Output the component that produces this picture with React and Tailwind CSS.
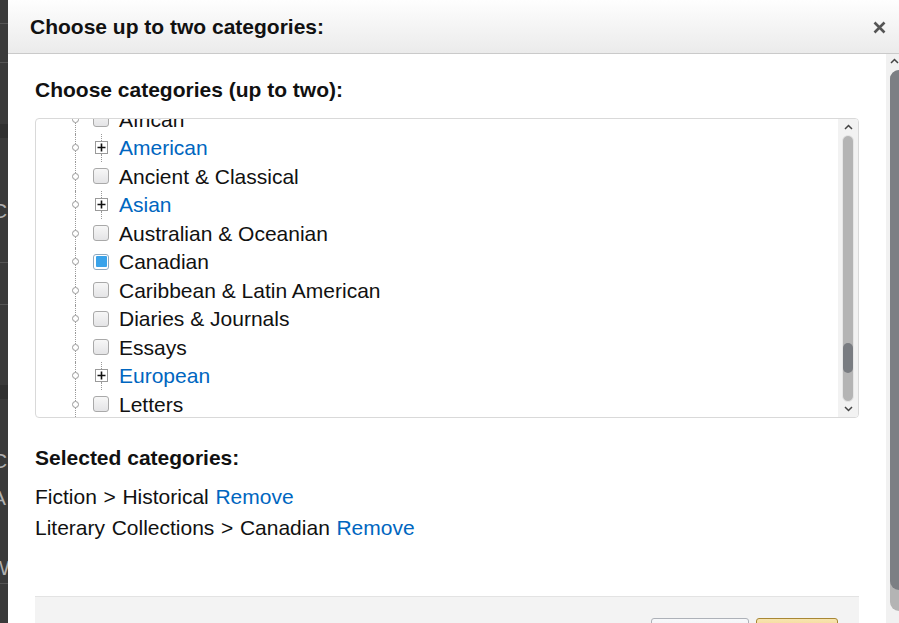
import React from 'react';

const items = [
    { label: 'African' },
    { label: 'American', expand: true },
    { label: 'Ancient & Classical' },
    { label: 'Asian', expand: true },
    { label: 'Australian & Oceanian' },
    { label: 'Canadian', checked: true },
    { label: 'Caribbean & Latin American' },
    { label: 'Diaries & Journals' },
    { label: 'Essays' },
    { label: 'European', expand: true },
    { label: 'Letters' },
    { label: 'Middle Eastern' },
];

const Node = () => (
    <div className="h-full w-[7px] flex flex-col items-center shrink-0">
        <div className="flex-1 border-l border-dotted border-[#9a9a9a]" />
        <div className="w-[7px] h-[7px] rounded-full border border-[#999] bg-white" />
        <div className="flex-1 border-l border-dotted border-[#9a9a9a]" />
    </div>
);

const Checkbox = ({ checked }) => (
    checked ? (
        <div className="w-[16px] h-[16px] rounded-[3px] border border-[#8fa9bf] bg-white p-[1.5px] shrink-0">
            <div className="w-full h-full rounded-[1px] bg-[#3aa3ea]" />
        </div>
    ) : (
        <div className="w-[16px] h-[16px] rounded-[3px] border border-[#a9a9a9] bg-gradient-to-b from-[#f7f7f7] to-[#e4e4e6] shrink-0" />
    )
);

const Expander = () => (
    <div className="w-[16px] h-full flex items-center shrink-0">
        <div className="ml-[2px] h-full flex flex-col items-center">
            <div className="flex-1 border-l border-dotted border-[#999]" />
            <div className="w-[13px] h-[13px] border border-[#9a9a9a] bg-white flex items-center justify-center">
                <svg width="9" height="9" viewBox="0 0 9 9"><path d="M4.5 0.5v8M0.5 4.5h8" stroke="#111" strokeWidth="1.6" /></svg>
            </div>
            <div className="flex-1 border-l border-dotted border-[#999]" />
        </div>
        <div className="w-[6px] ml-[1px] border-t border-dotted border-[#999]" />
    </div>
);

const Chevron = ({ up }) => (
    <svg width="9" height="6" viewBox="0 0 9 6">
        <path d={up ? 'M1 5l3.5-3.5L8 5' : 'M1 1l3.5 3.5L8 1'} fill="none" stroke="#444" strokeWidth="1.5" />
    </svg>
);

export default function App() {
    return (
        <div className="w-[899px] h-[623px] flex overflow-hidden bg-white text-[#111] font-['Liberation_Sans',Arial,sans-serif]">
            {/* page behind the overlay */}
            <div className="w-[8px] shrink-0 bg-[#3a3a3a] flex flex-col text-[#b0b0b0] text-[21px] leading-none overflow-hidden">
                <div className="h-[24px] shrink-0 border-b border-[#555]" />
                <div className="h-[39px] shrink-0 border-b border-[#555]" />
                <div className="h-[61px] shrink-0" />
                <div className="h-[14px] shrink-0 bg-[#303030]" />
                <div className="h-[36px] shrink-0" />
                <div className="h-[72px] shrink-0 flex items-center -ml-[8px]">C</div>
                <div className="h-[17px] shrink-0 border-b border-[#555]" />
                <div className="h-[42px] shrink-0 border-b border-[#555]" />
                <div className="h-[80px] shrink-0" />
                <div className="h-[14px] shrink-0 bg-[#303030]" />
                <div className="h-[50px] shrink-0" />
                <div className="h-[22px] shrink-0 flex items-center -ml-[8px]">C</div>
                <div className="h-[15px] shrink-0" />
                <div className="h-[22px] shrink-0 flex items-center -ml-[8px]">A</div>
                <div className="h-[48px] shrink-0" />
                <div className="h-[22px] shrink-0 flex items-center -ml-[10px]">W</div>
                <div className="h-[6px] shrink-0 border-b border-[#555]" />
            </div>

            {/* modal */}
            <div className="flex-1 flex flex-col min-h-0">
                <div className="h-[54px] shrink-0 flex items-center justify-between pl-[22px] pr-[13px] pt-[1px] bg-gradient-to-b from-[#fefefe] to-[#ebebeb] border-b border-[#cacaca]">
                    <h1 className="text-[21px] font-bold">Choose up to two categories:</h1>
                    <svg width="13" height="13" viewBox="0 0 13 13"><path d="M1.5 1.5l10 10M11.5 1.5l-10 10" stroke="#555" strokeWidth="2.6" /></svg>
                </div>

                <div className="flex-1 flex min-h-0">
                    <div className="flex-1 px-[27px] pt-[24px] flex flex-col overflow-hidden">
                        <h2 className="shrink-0 text-[21px] leading-[24px] font-bold">Choose categories (up to two):</h2>

                        <div className="shrink-0 mt-[16px] h-[300px] border border-[#d9d9d9] rounded-[4px] flex overflow-hidden">
                            <div className="flex-1 overflow-hidden">
                                <ul className="-mt-[14px]">
                                    {items.map((it) => (
                                        <li key={it.label} className="h-[28.5px] flex items-center pl-[36px]">
                                            <Node />
                                            <div className="ml-[14px] h-full flex items-center">
                                                {it.expand ? <Expander /> : <Checkbox checked={it.checked} />}
                                            </div>
                                            <span className={`ml-[10px] text-[21px] leading-none whitespace-nowrap ${it.expand ? 'text-[#0066c0]' : ''}`}>
                                                {it.label}
                                            </span>
                                        </li>
                                    ))}
                                </ul>
                            </div>
                            <div className="w-[20px] bg-[#f2f2f2] flex flex-col items-center pt-[5px] pb-[5px]">
                                <Chevron up />
                                <div className="mt-[5px] flex-1 w-[12px] rounded-full bg-[#b4b4b4] border border-[#e6e6e6] flex flex-col">
                                    <div className="mt-[207px] h-[30px] rounded-full bg-[#797c81]" />
                                </div>
                                <div className="mt-[4px]"><Chevron /></div>
                            </div>
                        </div>

                        <h2 className="shrink-0 mt-[28px] text-[21px] leading-[24px] font-bold">Selected categories:</h2>
                        <div className="shrink-0 mt-[11px] text-[21px] leading-[31px] [word-spacing:0.8px]">
                            <p>Fiction &gt; Historical <a className="text-[#0066c0]">Remove</a></p>
                            <p>Literary Collections &gt; Canadian <a className="text-[#0066c0]">Remove</a></p>
                        </div>

                        <div className="shrink-0 mt-[53px] h-[60px] bg-[#f3f3f3] border-t border-[#e3e3e3] flex justify-end items-start gap-[7px] pt-[21px] pr-[21px]">
                            <button className="w-[98px] h-[31px] rounded-[3px] border border-[#adb1b8] bg-gradient-to-b from-[#f7f8fa] to-[#e7e9ec]" />
                            <button className="w-[82px] h-[31px] rounded-[3px] border border-[#a88734] bg-gradient-to-b from-[#f7e4b0] to-[#f0c14b]" />
                        </div>
                    </div>

                    {/* modal body scrollbar */}
                    <div className="w-[13px] shrink-0 bg-[#f1f1f1] flex flex-col items-end pt-[4px]">
                        <div className="w-[9px] flex justify-center"><Chevron up /></div>
                        <div className="mt-[6px] w-[9px] flex-1 rounded-tl-full rounded-bl-full bg-[#b4b4b4] flex flex-col mb-[12px]">
                            <div className="h-[520px] rounded-tl-full rounded-bl-full bg-[#7c7f84]" />
                        </div>
                    </div>
                </div>
            </div>
        </div>
    );
}
